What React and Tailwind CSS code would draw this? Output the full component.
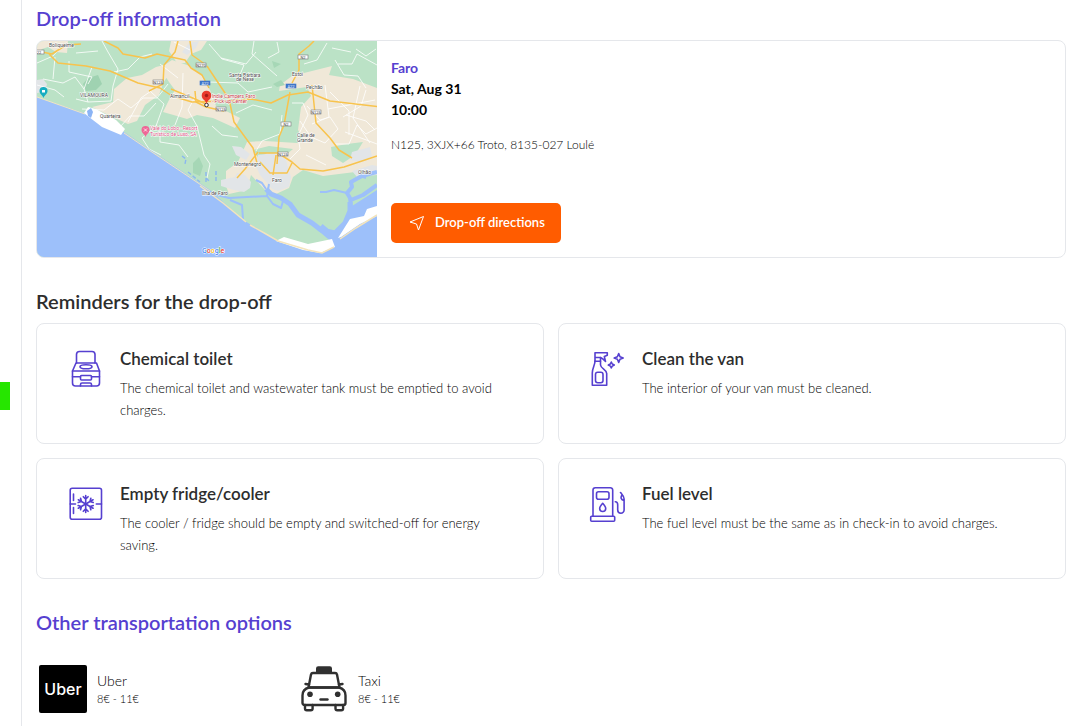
import React from "react";

const reminders = [
  { key: "toilet", title: "Chemical toilet", text: "The chemical toilet and wastewater tank must be emptied to avoid charges.", Icon: ToiletIcon },
  { key: "clean", title: "Clean the van", text: "The interior of your van must be cleaned.", Icon: SprayIcon },
  { key: "fridge", title: "Empty fridge/cooler", text: "The cooler / fridge should be empty and switched-off for energy saving.", Icon: FridgeIcon },
  { key: "fuel", title: "Fuel level", text: "The fuel level must be the same as in check-in to avoid charges.", Icon: FuelIcon },
];

const transports = [
  { key: "uber", name: "Uber", price: "8€ - 11€", Icon: UberLogo },
  { key: "taxi", name: "Taxi", price: "8€ - 11€", Icon: TaxiIcon },
];

function LineIcon({ children }) {
  return (
    <svg viewBox="0 0 40 40" className="mt-0.5 size-10 shrink-0 fill-none stroke-[#5640d0]" strokeWidth="1.6" strokeLinecap="round" strokeLinejoin="round" aria-hidden="true">
      {children}
    </svg>
  );
}

function ToiletIcon() {
  return (
    <LineIcon>
      <path d="M10.500 14V5.500a3 3 0 0 1 3-3H26a3 3 0 0 1 3 3V14" />
      <path d="M10 14h20.500l3 8v12a3 3 0 0 1-3 3h-21a3 3 0 0 1-3-3V22z" />
      <ellipse cx="20" cy="17.8" rx="6" ry="2" />
      <path d="M6.500 22h27M6.500 27.800h8M25.500 27.800h8" />
      <rect x="14.500" y="26.500" width="11" height="4.500" rx="1" />
      <path d="M14.500 37v-1.500a1.500 1.500 0 0 1 1.500-1.500h8a1.500 1.500 0 0 1 1.500 1.500V37" />
    </LineIcon>
  );
}

function SprayIcon() {
  return (
    <LineIcon>
      <path d="M7 12.300V3.700h12.300v2.500l-3 1.200 1.200 5-3-2.700-2-1.200H7" />
      <path d="M7 12.300h5.500V8.500" />
      <path d="M7 12.300C7 16 4.300 19 4.300 24v12.300h14.400V24.500c0-4-5.700-4.500-6.200-8.500v-3.700" />
      <rect x="7.500" y="23.300" width="7.500" height="10.400" rx="2.200" />
      <path d="M30.700 4.500l1.300 3.200 3.200 1.300-3.200 1.300-1.300 3.200-1.300-3.200L26.200 9l3.200-1.300z" />
      <path d="M23.300 13l1 2 2 1-2 1-1 2-1-2-2-1 2-1z" />
    </LineIcon>
  );
}

function FridgeIcon() {
  return (
    <LineIcon>
      <rect x="4.200" y="4.300" width="31.300" height="31" rx="2" />
      <path d="M7.500 10v6.500M7.500 23.500v6M4.200 20h5.300M30.300 20h5.200" />
      {[0, 60, 120, 180, 240, 300].map(a => (
        <path key={a} d="M19.700 20v-8.500M17.300 12.700l2.400 2.400 2.400-2.400" transform={`rotate(${a} 19.7 20)`} />
      ))}
    </LineIcon>
  );
}

function FuelIcon() {
  return (
    <LineIcon>
      <path d="M5 32V6a2.300 2.300 0 0 1 2.300-2.300h15A2.300 2.300 0 0 1 24.700 6v26" />
      <rect x="8.500" y="7.700" width="12.500" height="7.600" rx="2" />
      <path d="M14.700 19.300c1.700 2 3 3.700 3 5.200a3 3 0 0 1-6 0c0-1.500 1.300-3.200 3-5.200z" />
      <rect x="2.700" y="32.300" width="24" height="5" rx="1" />
      <path d="M27.300 17.700c2 0 2.400 1 2.400 3V26a3.200 3.200 0 0 0 6.400 0V15c0-2.500-2-4.500-3.600-6.500M34 11c-1.500 2.200-1.300 4.500 1.800 5.500" />
    </LineIcon>
  );
}

function UberLogo() {
  return (
    <div className="flex size-12 shrink-0 items-center justify-center rounded-xs bg-black font-['Inter',sans-serif] text-base font-medium text-white">
      Uber
    </div>
  );
}

function TaxiIcon() {
  return (
    <svg viewBox="0 0 48 48" className="size-12 shrink-0 fill-none stroke-[#303030]" strokeWidth="2.4" strokeLinejoin="round" strokeLinecap="round" aria-hidden="true">
      <path d="M16 7V3.500A2.200 2.200 0 0 1 18.200 1.300h11.600A2.200 2.200 0 0 1 32 3.500V7z" fill="#303030" stroke="none" />
      <path d="M13 8h22a2 2 0 0 1 2 1.500l2.500 13h-31L11 9.500A2 2 0 0 1 13 8z" />
      <path d="M5.500 19l3.500.5M42.500 19l-3.500.5" />
      <path d="M9 22.500h30c4 1 6.500 4 6.500 8V38a2 2 0 0 1-2 2h-39a2 2 0 0 1-2-2v-7.500c0-4 2.500-7 6.500-8z" />
      <path d="M5 40v3.500a1.800 1.800 0 0 0 1.800 1.800h4a1.800 1.800 0 0 0 1.800-1.800V40M35.500 40v3.500a1.800 1.800 0 0 0 1.800 1.800h4a1.800 1.800 0 0 0 1.800-1.800V40" />
      <circle cx="10" cy="29.300" r="2.800" fill="#303030" stroke="none" />
      <circle cx="37.700" cy="29.300" r="2.800" fill="#303030" stroke="none" />
      <path d="M20.500 34.500h7" />
    </svg>
  );
}

function RoadSign({ x, y, label, blue }) {
  return (
    <g>
      <rect x={x - 5} y={y - 2} width="10" height="4" fill={blue ? "#3f76c9" : "#fff"} stroke={blue ? "#3f76c9" : "#777"} strokeWidth="0.6" />
      <text x={x} y={y + 1.5} textAnchor="middle" fontSize="4" fill={blue ? "#fff" : "#444"}>{label}</text>
    </g>
  );
}

function MapPreview() {
  return (
    <svg viewBox="37 41 340 216" preserveAspectRatio="xMidYMid slice" className="w-[340px] shrink-0 font-[Roboto,sans-serif]" role="img" aria-label="Map of Faro">
      <rect x="37" y="41" width="340" height="216" fill="#bbe2c6" />

      {/* built-up areas */}
      <g fill="#f0e8d8">
        <path d="M37 41h31l-1 12-11-1-8-5-6 2-5 5z" />
        <path d="M171 41h36l-6 9-10 4-6 9-8 0-8-12z" />
        <path d="M92 107l21-5 1-13 13-11 15-3 14-8 8-2 8 5-9 13-4 12-14 10-8 16-9 3-26-12z" />
        <path d="M160 68l12-8 18 6 12 10 8 14 6 16 24 12-5 10-22-10-16-3-10 4-10-3-14-4 6-12 6-10-6-8z" />
        <path d="M280 85l12-9 40-10-3 9 24 4 24 9v61l-12 6-12 10-14 0-10-6-16-4-15-25 3-23 10-11-4-9-28 4z" />
        <path d="M226 171l12-9 9-20 18-1 32 2 10-7 28 7 8 11 34-10v23l-22 5-32 4-20-6-10 7-4 11-13 6-9-2-16-17-4 15-18 4-3-8z" />
      </g>
      <g fill="#bbe2c6">
        <path d="M253 150l16-4 24 3-6 5-20-1-8 6z" />
        <path d="M331 147l16-3 16-2-8 13-12 8-11-7z" />
      </g>
      <g fill="#e2e5e8">
        <path d="M37 80l6-1 4 5-2 8-8 1z" />
        <path d="M189 43l10-2-3 7-9 7-5-3z" />
        <path d="M221 180l14-3 2-4 8 2 6 7-1 6-6 4-10-2-13-4z" />
        <path d="M258 155l18-2 10 7 5 17-2 10-11 4-6-2-12-14-4-9z" />
        <path d="M232 146l9 1 9 7-4 6-10-5z" />
        <path d="M352 152l18-5 2 9-10 6-12-2zM352 171l20-6 5 1v9l-20 2z" />
      </g>
      <path d="M88 78l10-3 4 9-6 6-10 1-3-7z" fill="#9fd2b1" />
      <path d="M193 163l6-6 4 9-3 10-7-3zM273 84l8-4 4 5-8 2zM272 61l9 3-7 4z" fill="#a6d7b6" />

      {/* minor roads */}
      <g fill="none" stroke="#fff" strokeWidth="0.8" strokeLinejoin="round">
        <path d="M37 63l16-7 11-12M55 57l-2 22M69 61v11l23 5-4 7M92 67l-8 22 4 13 23-1 2-15 5-17-10-17-6-11M76 53l22-2M43 79l20 4 12-6 9 12M76 99l12 3M114 72l14-3 12-12 12-3M64 97l-9-7-18-5" />
        <path d="M82 109l22 1 14-11 13 9 12-10 14 0 11-14M128 122l13-24 23-16M120 127l10-11 14 0 12-13M150 91l14 13-8 22-14 12 7 11 12 6M160 125l0 17 19 3 9 12M183 73l-1 34-7 18M196 95l-8 15 9 16 7 29 6 9-3 14M160 64l18 14M174 42l16 8M209 44l13 15 22 6-7 17M221 58l25 6 10-12M254 41l-2 13 25 22M277 42l2 10-11 6M327 43l-10 17-13 4M332 48l19 4M338 64l14 0 5-10 20 11M356 49l10 7 10-7M335 60l9 15 14 1 8 12" />
        <path d="M208 82l30 1 10 9 24-5M212 126l10 9 16 2M256 151l6-10 18-7 2-19M272 110l-19-5-17 8M292 103l11 0 5 12-10 21 2 13-11 11-9-6M307 106l13 14 10-3 8 12-13 14-14-6-11-16M325 85l4 32-17 7M343 117l18-11 5-16M346 115l20 6 9 9M328 109l47-9M334 144l15 0 8-19 9 9 11-6M345 132l32 12M330 92l19 19 0 24M360 86l-7 32 17 25M306 155l20 10" />
      </g>

      {/* major roads */}
      <g fill="none" stroke="#f8c34c" strokeWidth="1.5" strokeLinejoin="round">
        <path d="M37 51l15 3 14-9 15-1M49 54l9 9 28 3 24 5 28 12 22 5 12 8 20 6 34-1 25-2 20 4 17-8 20-3 22 9 61 7" />
        <path d="M104 41l14 7 5 6 22 4 12-4 28 6 6 8 11 7 7 13M178 41l-3 11-11 13-1 19-14 7M190 41l2 14 14 10" />
        <path d="M207 66l10 15 12 18 5 23 19 26 4 15M292 83l7-13 0-16 10-8 5-5M290 92l-6 33-5 12-2 27M312 85l4 38 14 15 9 12 13 8M258 152l-13 17-8 9M259 153l19 0 14 9 8 7 23 2 21-4 33-11M276 155l-3 20M260 162l10 11 17 0 5-10M195 91l1 11 10 5 18 4" />
        <path d="M171 89l24 10 11 5" />
      </g>

      {/* ocean and lagoon */}
      <path d="M37 97L84 113 92 108 124 132 146 147 210 190 243 220 278 241 320 253 333 240 345 222 352 206 377 190V257H37z" fill="#9dc0fa" />
      <g fill="none" stroke="#9dc0fa" strokeLinejoin="round">
        <path d="M266 189l5 5 10 4 9 6 8 11 14 8 9 7 14 3 10-10 5-12 0-9" strokeWidth="5" />
        <path d="M320 227l13 11 14-8 6-11" strokeWidth="8" />
        <path d="M351 206l-1-8-3-5 5-6-1-5 11-6 15-4" strokeWidth="4" />
        <path d="M351 200l12-5 14-10" strokeWidth="4" />
        <path d="M217 195l12 3 18-1 20-1 2-12M267 196l6 8 8 4 2-7M230 200l12 5 1 14M266 189l-4-6-6-3M347 193l-13-3-8 2-6 0M350 182l10-6 6 2" strokeWidth="2" />
      </g>
      <path d="M37 97l48 17M124 133l22 15 64 43" fill="none" stroke="#f1e5c0" strokeWidth="1" />
      <path d="M84 113l4-6 8 2 20 11 9 9-4 6-19-8-13-10z" fill="#fff" />
      <path d="M87 111l4-3 2 4-2 6-3-2z" fill="#8bb4f5" />
      <path d="M182 156l4 3-1 5M188 172l12 10M206 172v10M216 171v12M206 178l4 4" fill="none" stroke="#8bb7f0" strokeWidth="1.4" strokeDasharray="4 2" />
      <path d="M276 241l8-4 24 7 24-5 3 8-15 6-17-3z" fill="#fff" />
      <path d="M338 238l12-19 14-3 3-7 10-3v10l-17 8-19 13z" fill="#fff" />
      <path d="M200 186l23 17 23 19M250 225l16 9 12 7 30 9 14 3 12-6M340 239l16-11 21-13" fill="none" stroke="#f3e4bd" strokeWidth="1.5" />

      {/* labels */}
      <g fontSize="5" fill="#4b4b4b" stroke="#fff" strokeWidth="1" paintOrder="stroke">
        <text x="49" y="47">Boliqueime</text>
        <text x="80" y="97">VILAMOURA</text>
        <text x="100" y="118">Quarteira</text>
        <text x="170" y="98">Almancil</text>
        <text x="229" y="77">Santa Bárbara</text>
        <text x="236" y="81">de Nexe</text>
        <text x="292" y="76">Estoi</text>
        <text x="306" y="89">Pechão</text>
        <text x="297" y="137">Calle de</text>
        <text x="297" y="142">Grande</text>
        <text x="234" y="166">Montenegro</text>
        <text x="272" y="182">Faro</text>
        <text x="358" y="174">Olhão</text>
        <text x="202" y="195">Ilha de Faro</text>
      </g>
      <RoadSign x={39} y={52} label="22" />
      <RoadSign x={158} y={82} label="N125" />
      <RoadSign x={201} y={65} label="N270" />
      <RoadSign x={205} y={83} label="A22" blue />
      <RoadSign x={291} y={86} label="A22" blue />
      <RoadSign x={303} y={57} label="N2" />
      <RoadSign x={316} y={112} label="N125" />
      <RoadSign x={286} y={124} label="N2" />
      <RoadSign x={221} y={109} label="N125" />
      <RoadSign x={283} y={154} label="N125" />

      <path d="M43.500 98c-1-3-4-4-4-7a4 4 0 0 1 8 0c0 3-3 4-4 7z" fill="#16adc1" />
      <rect x="42" y="90" width="3" height="2.500" fill="#fff" />
      <path d="M145.500 137c-1-3-4-4-4-7a4 4 0 0 1 8 0c0 3-3 4-4 7z" fill="#ee6796" />
      <path d="M144 128.500l3 3m0-3l-3 3" stroke="#fff" strokeWidth="0.8" />
      <g fontSize="5" fill="#dc5284" stroke="#fff" strokeWidth="1" paintOrder="stroke">
        <text x="150" y="130">Vale do Lobo - Resort</text>
        <text x="150" y="136">Turístico de Luxo, SA</text>
      </g>
      <circle cx="206.500" cy="105" r="1.800" fill="#fff" stroke="#333" />
      <path d="M206.500 104c-.8-4-4.800-4.500-4.800-8.500a4.800 4.800 0 0 1 9.600 0c0 4-4 4.500-4.800 8.500z" fill="#e9392c" />
      <circle cx="206.500" cy="95.500" r="1.700" fill="#a71b14" />
      <g fontSize="5" fill="#c63a45" stroke="#fff" strokeWidth="1" paintOrder="stroke">
        <text x="212" y="98">Indie Campers Faro</text>
        <text x="212" y="103">- Pick-up Center</text>
      </g>
      <text x="202" y="253" fontSize="7" fontWeight="500" stroke="#fff" strokeWidth="1" paintOrder="stroke">
        <tspan fill="#4285f4">G</tspan><tspan fill="#ea4335">o</tspan><tspan fill="#fbbc05">o</tspan><tspan fill="#4285f4">g</tspan><tspan fill="#34a853">l</tspan><tspan fill="#ea4335">e</tspan>
      </text>
    </svg>
  );
}

export default function App() {
  return (
    <div className="flex min-h-screen bg-white font-['Lato',sans-serif] text-[#2d2d2d]">
      <div className="w-[22px] shrink-0 border-r border-gray-200 pt-[382px]">
        <div className="h-7 w-2.5 bg-[#26e600]" />
      </div>

      <main className="min-w-0 flex-1 pt-0.5 pr-[15px] pl-3.5">
        <section>
          <h2 className="text-[20px] leading-8 font-semibold text-[#5640d0]">Drop-off information</h2>
          <div className="mt-1.5 flex overflow-hidden rounded-lg border border-gray-200">
            <MapPreview />
            <div className="flex min-h-[216px] flex-col items-start px-3.5 pt-4 pb-3.5">
              <div className="text-sm leading-[21px] font-bold text-black">
                <p className="text-[#5640d0]">Faro</p>
                <p>Sat, Aug 31</p>
                <p>10:00</p>
              </div>
              <p className="mt-3.5 text-xs leading-[22px] font-light text-black">N125, 3XJX+66 Troto, 8135-027 Loulé</p>
              <button className="mt-auto flex h-10 items-center gap-2 rounded-[5px] bg-[#ff5c00] px-4 text-[13px] font-semibold text-white">
                <svg viewBox="0 0 16 16" className="mx-0.5 size-4 fill-none stroke-white" strokeLinejoin="round" aria-hidden="true">
                  <path d="M14.500 1.500L1 7l6.500 2 2 6z" />
                </svg>
                Drop-off directions
              </button>
            </div>
          </div>
        </section>

        <section className="mt-[27px]">
          <h2 className="text-[20px] leading-8 font-semibold">Reminders for the drop-off</h2>
          <div className="mt-1.5 grid grid-cols-2 gap-3.5">
            {reminders.map(({ key, title, text, Icon }) => (
              <article key={key} className="flex gap-3.5 rounded-lg border border-gray-200 px-[29px] pt-[23px] pb-[22px]">
                <Icon />
                <div>
                  <h3 className="text-[17px] leading-6 font-semibold">{title}</h3>
                  <p className="mt-1.5 text-[13px] leading-[22px] font-light text-black">{text}</p>
                </div>
              </article>
            ))}
          </div>
        </section>

        <section className="mt-[27px]">
          <h2 className="text-[20px] leading-8 font-semibold text-[#5640d0]">Other transportation options</h2>
          <div className="mt-[27px] grid grid-cols-4 gap-3.5">
            {transports.map(({ key, name, price, Icon }) => (
              <div key={key} className="flex items-center gap-2.5 pl-[3px]">
                <Icon />
                <div className="font-light text-black">
                  <p className="text-sm leading-5">{name}</p>
                  <p className="text-[11px] leading-4">{price}</p>
                </div>
              </div>
            ))}
          </div>
        </section>
      </main>
    </div>
  );
}
